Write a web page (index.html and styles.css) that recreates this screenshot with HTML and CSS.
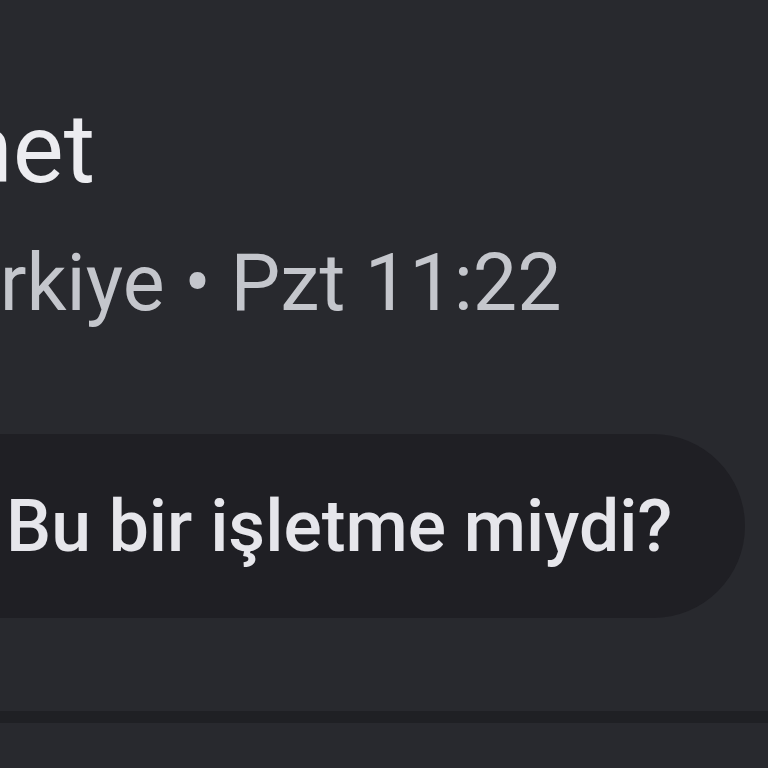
FILE: index.html
```html
<!DOCTYPE html>
<html lang="tr">
<head>
    <meta charset="UTF-8">
    <meta name="viewport" content="width=device-width, initial-scale=1.0">
    <title>Yorum</title>
    <link rel="stylesheet" href="styles.css">
</head>
<body>
    <div class="review">
        <div class="author">
            <div class="name">Mehmet</div>
            <div class="meta">Van, Türkiye • Pzt 11:22</div>
        </div>
        <button class="chip">Bu bir işletme miydi?</button>
    </div>
    <div class="divider"></div>
</body>
</html>
```

FILE: styles.css
```css
body {
    margin: 0;
    background-color: #28292e;
    font-family: Roboto, "Noto Sans", sans-serif;
    overflow: hidden;
    height: 768px;
}
.review {
    margin-left: -259px;
    padding-top: 92px;
}
.name {
    font-size: 96px;
    line-height: 115px;
    color: #ececf0;
    white-space: nowrap;
}
.meta {
    margin-top: 28px;
    margin-left: 3px;
    font-size: 79px;
    line-height: 96px;
    color: #c4c6cc;
    white-space: nowrap;
}
.chip {
    display: flex;
    align-items: center;
    margin-top: 103px;
    height: 184px;
    width: 1004px;
    padding: 0 0 0 265px;
    border: none;
    border-radius: 92px;
    background-color: #1f1f24;
    color: #e6e6eb;
    font-family: inherit;
    font-size: 71.5px;
    font-weight: 500;
}
.divider {
    margin-top: 93px;
    height: 12px;
    background-color: #1f2024;
}
```
